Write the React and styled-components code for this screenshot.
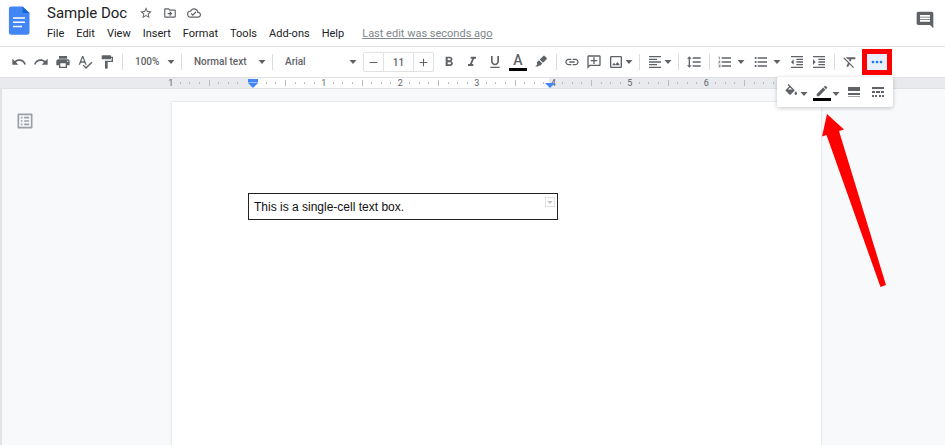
import styled, { createGlobalStyle, css } from "styled-components";
import {
  MdAdd,
  MdEdit,
  MdFormatAlignLeft,
  MdFormatBold,
  MdFormatClear,
  MdFormatIndentDecrease,
  MdFormatIndentIncrease,
  MdFormatItalic,
  MdFormatLineSpacing,
  MdFormatListBulleted,
  MdFormatListNumbered,
  MdFormatPaint,
  MdFormatUnderlined,
  MdInsertComment,
  MdLink,
  MdMoreHoriz,
  MdOutlineAddComment,
  MdOutlineCloudDone,
  MdOutlineDriveFileMove,
  MdOutlineImage,
  MdOutlineListAlt,
  MdPrint,
  MdRedo,
  MdRemove,
  MdSpellcheck,
  MdStarBorder,
  MdUndo,
} from "react-icons/md";

const GlobalStyle = createGlobalStyle`
  * {
    box-sizing: border-box;
  }
  html, body, #root {
    height: 100%;
  }
  body {
    margin: 0;
    overflow: hidden;
    font-family: Roboto, "Liberation Sans", sans-serif;
    color: #3c4043;
    background: #fff;
  }
  button, input, select {
    margin: 0;
    padding: 0;
    border: 0;
    background: none;
    font-family: inherit;
    color: inherit;
  }
  svg {
    display: block;
    flex-shrink: 0;
  }
`;

const Shell = styled.div`
  min-height: 100%;
  display: flex;
  flex-direction: column;
`;

const Header = styled.header`
  display: flex;
  align-items: flex-start;
  height: 47px;
  padding: 4px 10px 0 8px;
  border-bottom: 1px solid #dfe1e5;
`;

const HomeLink = styled.a`
  margin: 2px 17px 0 0;
`;

const Heading = styled.div`
  flex: 1;
`;

const TitleRow = styled.div`
  display: flex;
  align-items: center;
  height: 18px;
  color: #5f6368;
`;

const TitleInput = styled.input`
  width: 87px;
  font-size: 15px;
  line-height: 18px;
  color: #202124;
`;

const TitleButton = styled.button`
  display: flex;
  justify-content: center;
  width: 24px;
  font-size: 14px;
`;

const Menu = styled.nav`
  display: flex;
  gap: 12px;
  height: 24px;
  align-items: center;
`;

const MenuButton = styled.button`
  font-size: 11px;
  line-height: 16px;
  color: #202124;
`;

const LastEdit = styled.a`
  margin-left: 6px;
  font-size: 11px;
  line-height: 16px;
  color: #80868b;
`;

const CommentsButton = styled.button`
  margin-top: 6px;
  font-size: 20px;
  color: #5f6368;
`;

const Toolbar = styled.div`
  display: flex;
  align-items: center;
  height: 30px;
  padding-left: 8px;
  color: #5f6368;
`;

const Group = styled.div`
  display: flex;
  align-items: center;
  gap: ${(props) => props.$gap || 0}px;
`;

const Divider = styled.span`
  width: 1px;
  height: 16px;
  margin: 0 4px;
  background: #dadce0;
`;

const ToolButton = styled.button`
  display: flex;
  flex-shrink: 0;
  align-items: center;
  justify-content: center;
  width: 22px;
  height: 22px;
  font-size: 16px;

  ${(props) =>
    props.$menu &&
    css`
      justify-content: flex-start;
      gap: ${props.$menu === "wide" ? 4 : 1}px;
      width: ${props.$menu === "wide" ? 36 : 30}px;
      padding-left: 3px;
    `}
`;

const Inked = styled.span`
  display: flex;
  flex-direction: column;
  align-items: center;
  width: 18px;
  border-bottom: 3px solid #000;
  font-size: 14px;
  line-height: 15px;
  font-weight: 500;
`;

const Mirrored = styled.span`
  display: flex;
  transform: scaleX(-1);
`;

const SelectWrap = styled.label`
  display: flex;
  align-items: center;
  width: ${(props) => props.$width}px;
  padding: 0 2px 0 8px;
`;

const Select = styled.select`
  appearance: none;
  flex: 1;
  min-width: 0;
  font-size: 10px;
  line-height: 16px;
  font-weight: 500;
`;

const SizeBox = styled.div`
  display: flex;
  align-items: center;
  width: 71px;
  height: 20px;
  margin: 0 4px;
  border: 1px solid #e0e2e5;
  border-radius: 2px;
`;

const SizeButton = styled.button`
  display: flex;
  justify-content: center;
  width: 19px;
  font-size: 13px;
`;

const SizeInput = styled.input`
  flex: 1;
  min-width: 0;
  height: 18px;
  border: solid #e0e2e5;
  border-width: 0 1px;
  text-align: center;
  font-size: 10px;
  font-weight: 500;
`;

const MoreWrap = styled.div`
  position: relative;
  margin-left: 1px;
`;

const MoreButton = styled.button`
  display: flex;
  align-items: center;
  justify-content: center;
  width: 30px;
  height: 26px;
  border: 5px solid #f00;
  background: #e8f0fe;
  font-size: 16px;
  color: #1a73e8;
`;

const MoreMenu = styled.div`
  position: absolute;
  z-index: 2;
  top: 28px;
  right: -1px;
  display: flex;
  align-items: center;
  width: 116px;
  height: 30px;
  padding: 0 4px 0 3px;
  border-radius: 2px;
  background: #fff;
  box-shadow: 0 1px 4px rgba(60, 64, 67, 0.3);

  ${Group} {
    margin-left: auto;
  }
`;

const LowCaret = styled.span`
  padding-top: 4px;
`;

const Pointer = styled.svg`
  position: absolute;
  z-index: 3;
  top: 64px;
  right: -2px;
  overflow: visible;
`;

const Ruler = styled.div`
  display: flex;
  height: 12px;
  padding-left: 166px;
  border-top: 1px solid #dfe1e5;
  border-bottom: 1px solid #dfe1e5;
  background: #e8eaed;
`;

const RulerTrack = styled.div`
  display: flex;
  flex: 0 0 660px;
`;

const RulerCell = styled.span`
  position: relative;
  display: flex;
  flex: 1 1 0;
  min-width: 0;
  align-items: center;
  justify-content: center;
  background: ${(props) => (props.$active ? "#fff" : "transparent")};
  font-size: 9px;
  line-height: 10px;
  color: #5f6368;
`;

const Tick = styled.span`
  width: 1px;
  height: ${(props) => (props.$half ? 6 : 2)}px;
  background: #b9bcc1;
`;

const IndentMarker = styled.svg`
  position: absolute;
  z-index: 1;
  left: -4px;
  top: 1px;
`;

const Workspace = styled.main`
  display: flex;
  flex: 1;
  padding-top: 13px;
  border-left: 2px solid #e1e3e6;
  background: #f8f9fb;
`;

const Rail = styled.aside`
  flex: 0 0 170px;
  padding: 9px 0 0 13px;
  color: #9aa0a6;
`;

const OutlineButton = styled.button`
  font-size: 20px;
`;

const Page = styled.article`
  flex: 0 1 649px;
  padding: 91px 76px 0;
  background: #fff;
  box-shadow: 0 0 2px rgba(60, 64, 67, 0.25);
`;

const TextTable = styled.table`
  width: 310px;
  border-collapse: collapse;
`;

const TextCell = styled.td`
  position: relative;
  height: 26px;
  padding: 0 5px;
  border: 1px solid #222;
  font-family: "Liberation Sans", Arial, sans-serif;
  font-size: 12px;
  line-height: 16px;
  color: #111;
`;

const CellMenu = styled.button`
  position: absolute;
  top: 3px;
  right: 2px;
  display: flex;
  align-items: center;
  justify-content: center;
  width: 10px;
  height: 10px;
  border: 1px solid #e0e0e0;
  color: #bdbdbd;
`;

const Caret = ({ width = 8 }) => (
  <svg width={width} height={width / 2} viewBox="0 0 8 4" fill="currentColor">
    <path d="M0.5 0h7L4 4z" />
  </svg>
);

const DocsLogo = () => (
  <svg width="22" height="30" viewBox="0 0 22 30">
    <path
      d="M3.2 0.5h11.3L21.5 7v19.5a2.3 2.3 0 0 1-2.3 2.3H3.2A2.3 2.3 0 0 1 0.9 26.5V2.8A2.3 2.3 0 0 1 3.2 0.5z"
      fill="#4285f4"
    />
    <path d="M14.5 0.5L21.5 7h-7z" fill="#1967d2" />
    <path d="M5 11.2h12v1.5H5zM5 15.5h12v1.5H5zM5 19.8h9v1.5H5z" fill="#fff" />
  </svg>
);

const Highlighter = () => (
  <svg width="16" height="16" viewBox="0 0 16 16" fill="currentColor">
    <path d="M10.3 1.9a1 1 0 0 1 1.4 0l1.9 1.9a1 1 0 0 1 0 1.4L10 8.7 6.7 5.5z" />
    <path d="M6 6.2l3.3 3.3-1.9 1.9a1 1 0 0 1-1.4 0l-1 1.2H2.3l1.9-2.2-.1-.9a1 1 0 0 1 0-1.4z" />
  </svg>
);

const FillBucket = () => (
  <svg width="16" height="16" viewBox="-1 0 25 25" fill="currentColor">
    <path d="M16.56 8.94L7.62 0 6.21 1.41l2.38 2.38-5.15 5.15c-.59.59-.59 1.54 0 2.12l5.5 5.5c.29.29.68.44 1.06.44s.77-.15 1.06-.44l5.5-5.5c.59-.58.59-1.53 0-2.12zM6.7 8.6L10 5.3 13.300 8.600H6.700zM19 11.5s-2 2.17-2 3.5c0 1.1.9 2 2 2s2-.9 2-2c0-1.33-2-3.5-2-3.5z" />
  </svg>
);

const BorderWidth = () => (
  <svg width="16" height="16" viewBox="0 0 16 16" fill="currentColor">
    <path d="M2 3h12v4H2zM2 9h12v2H2z" />
    <path d="M2 12h12v1H2z" opacity="0.6" />
  </svg>
);

const BorderDash = () => (
  <svg width="16" height="16" viewBox="0 0 16 16" fill="currentColor">
    <path d="M2 3h12v2H2zM2 7h3v2H2zM6 7h4v2H6zM11 7h3v2h-3z" />
    <path d="M2 11h2v2H2zM5 11h2v2H5zM9 11h2v2H9zM12 11h2v2h-2z" />
  </svg>
);

const textTools = [
  ["Bold", MdFormatBold],
  ["Italic", MdFormatItalic],
  ["Underline", MdFormatUnderlined],
];

const historyTools = [
  ["Undo", MdUndo],
  ["Redo", MdRedo],
  ["Print", MdPrint],
  ["Spelling check", MdSpellcheck],
  ["Paint format", MdFormatPaint],
];

const menus = ["File", "Edit", "View", "Insert", "Format", "Tools", "Add-ons", "Help"];

const Tool = ({ label, icon: Icon, menu }) => (
  <ToolButton aria-label={label} $menu={menu}>
    <Icon />
    {menu && <Caret />}
  </ToolButton>
);

const ToolSelect = ({ label, value, width }) => (
  <SelectWrap $width={width}>
    <Select aria-label={label} defaultValue={value}>
      <option>{value}</option>
    </Select>
    <Caret />
  </SelectWrap>
);

const AddCommentIcon = () => (
  <Mirrored>
    <MdOutlineAddComment />
  </Mirrored>
);

// One cell per eighth of an inch, each centred on its mark.
const eighths = Array.from({ length: 69 }, (_, i) => i);

const RulerMark = ({ index }) => {
  if (index % 8 === 0) {
    return index === 8 ? null : Math.abs(index / 8 - 1);
  }
  return <Tick $half={index % 4 === 0} />;
};

const PageRuler = () => (
  <Ruler>
    <RulerTrack>
      {eighths.map((i) => (
        <RulerCell key={i} $active={i >= 9 && i < 40}>
          <RulerMark index={i} />
          {(i === 9 || i === 40) && (
            <IndentMarker width="10" height="9" viewBox="0 0 10 9" fill="#4285f4">
              {i === 9 && <path d="M0 0h10v3.5H0z" />}
              <path d="M0 4h10L5 9z" />
            </IndentMarker>
          )}
        </RulerCell>
      ))}
    </RulerTrack>
  </Ruler>
);

const App = () => {
  return (
    <Shell>
      <GlobalStyle />
      <Header>
        <HomeLink href="#" aria-label="Docs home">
          <DocsLogo />
        </HomeLink>
        <Heading>
          <TitleRow>
            <TitleInput aria-label="Document name" defaultValue="Sample Doc" />
            <TitleButton aria-label="Star">
              <MdStarBorder />
            </TitleButton>
            <TitleButton aria-label="Move">
              <MdOutlineDriveFileMove />
            </TitleButton>
            <TitleButton aria-label="Document status">
              <MdOutlineCloudDone />
            </TitleButton>
          </TitleRow>
          <Menu>
            {menus.map((name) => (
              <MenuButton key={name}>{name}</MenuButton>
            ))}
            <LastEdit href="#">Last edit was seconds ago</LastEdit>
          </Menu>
        </Heading>
        <CommentsButton aria-label="Open comment history">
          <MdInsertComment />
        </CommentsButton>
      </Header>

      <Toolbar>
        <Group>
          {historyTools.map(([label, icon]) => (
            <Tool key={label} label={label} icon={icon} />
          ))}
        </Group>
        <Divider />
        <ToolSelect label="Zoom" value="100%" width={50} />
        <Divider />
        <ToolSelect label="Styles" value="Normal text" width={82} />
        <Divider />
        <ToolSelect label="Font" value="Arial" width={82} />
        <SizeBox>
          <SizeButton aria-label="Decrease font size">
            <MdRemove />
          </SizeButton>
          <SizeInput aria-label="Font size" defaultValue="11" />
          <SizeButton aria-label="Increase font size">
            <MdAdd />
          </SizeButton>
        </SizeBox>
        <Group $gap={1}>
          {textTools.map(([label, icon]) => (
            <Tool key={label} label={label} icon={icon} />
          ))}
          <ToolButton aria-label="Text color">
            <Inked>A</Inked>
          </ToolButton>
          <Tool label="Highlight color" icon={Highlighter} />
        </Group>
        <Divider />
        <Tool label="Insert link" icon={MdLink} />
        <Tool label="Add comment" icon={AddCommentIcon} />
        <Tool label="Insert image" icon={MdOutlineImage} menu="tight" />
        <Divider />
        <Tool label="Align" icon={MdFormatAlignLeft} menu="tight" />
        <Divider />
        <Tool label="Line spacing" icon={MdFormatLineSpacing} />
        <Divider />
        <Tool label="Numbered list" icon={MdFormatListNumbered} menu="wide" />
        <Tool label="Bulleted list" icon={MdFormatListBulleted} menu="wide" />
        <Tool label="Decrease indent" icon={MdFormatIndentDecrease} />
        <Tool label="Increase indent" icon={MdFormatIndentIncrease} />
        <Divider />
        <Tool label="Clear formatting" icon={MdFormatClear} />
        <MoreWrap>
          <MoreButton aria-label="More">
            <MdMoreHoriz />
          </MoreButton>
          <MoreMenu>
            <ToolButton aria-label="Background color" $menu="tight">
              <FillBucket />
              <LowCaret>
                <Caret />
              </LowCaret>
            </ToolButton>
            <ToolButton aria-label="Border color" $menu="tight">
              <Inked>
                <MdEdit />
              </Inked>
              <LowCaret>
                <Caret />
              </LowCaret>
            </ToolButton>
            <Group $gap={2}>
              <Tool label="Border width" icon={BorderWidth} />
              <Tool label="Border dash" icon={BorderDash} />
            </Group>
          </MoreMenu>
          <Pointer width="72" height="176" viewBox="0 0 72 176" fill="#f00">
            <path d="M5 1L22 16.5L17 18L64 172L58.5 174L4.5 22L0 23.5z" />
          </Pointer>
        </MoreWrap>
      </Toolbar>

      <PageRuler />

      <Workspace>
        <Rail>
          <OutlineButton aria-label="Show document outline">
            <MdOutlineListAlt />
          </OutlineButton>
        </Rail>
        <Page>
          <TextTable>
            <tbody>
              <tr>
                <TextCell>
                  This is a single-cell text box.
                  <CellMenu aria-label="Cell options">
                    <Caret width={6} />
                  </CellMenu>
                </TextCell>
              </tr>
            </tbody>
          </TextTable>
        </Page>
      </Workspace>
    </Shell>
  );
};

export default App;
